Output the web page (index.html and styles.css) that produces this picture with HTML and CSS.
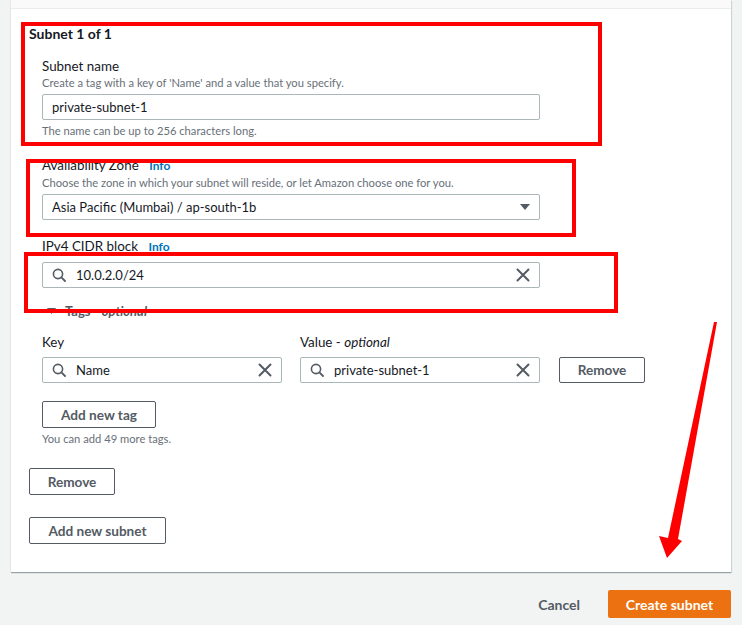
FILE: index.html
```html
<!DOCTYPE html>
<html lang="en">
<head>
    <meta charset="UTF-8">
    <title>Create subnet</title>
    <link rel="stylesheet" href="styles.css">
</head>
<body>
    <div class="page">
        <div class="card">
            <div class="card-top"></div>
            <div class="card-body">
                <h3 class="subnet-title">Subnet 1 of 1</h3>

                <div class="field first">
                    <label class="label">Subnet name</label>
                    <p class="desc">Create a tag with a key of 'Name' and a value that you specify.</p>
                    <div class="input wide">
                        <span class="value">private-subnet-1</span>
                    </div>
                    <p class="hint">The name can be up to 256 characters long.</p>
                </div>

                <div class="field az">
                    <label class="label">Availability Zone <a class="info">Info</a></label>
                    <p class="desc">Choose the zone in which your subnet will reside, or let Amazon choose one for you.</p>
                    <div class="input wide">
                        <span class="value">Asia Pacific (Mumbai) / ap-south-1b</span>
                        <svg class="caret" width="10" height="6" viewBox="0 0 10 6"><polygon points="0,0 10,0 5,6" fill="#545b64"/></svg>
                    </div>
                </div>

                <div class="field cidr">
                    <label class="label">IPv4 CIDR block <a class="info">Info</a></label>
                    <div class="input wide search">
                        <svg class="icon-search" width="14" height="14" viewBox="0 0 14 14"><circle cx="6" cy="6" r="4.6" fill="none" stroke="#545b64" stroke-width="1.6"/><line x1="9.4" y1="9.4" x2="13" y2="13" stroke="#545b64" stroke-width="1.8" stroke-linecap="round"/></svg>
                        <span class="value">10.0.2.0/24</span>
                        <svg class="icon-x" width="14" height="14" viewBox="0 0 14 14"><path d="M1.5 1.5 L12.5 12.5 M12.5 1.5 L1.5 12.5" stroke="#545b64" stroke-width="2" stroke-linecap="round"/></svg>
                    </div>
                </div>

                <div class="tags-head">
                    <svg width="9" height="6" viewBox="0 0 9 6"><polygon points="0,0 9,0 4.5,6" fill="#545b64"/></svg>
                    <span>Tags - <i>optional</i></span>
                </div>

                <div class="tags">
                    <div class="tag-row">
                        <div class="tag-col">
                            <label class="label">Key</label>
                            <div class="input search">
                                <svg class="icon-search" width="14" height="14" viewBox="0 0 14 14"><circle cx="6" cy="6" r="4.6" fill="none" stroke="#545b64" stroke-width="1.6"/><line x1="9.4" y1="9.4" x2="13" y2="13" stroke="#545b64" stroke-width="1.8" stroke-linecap="round"/></svg>
                                <span class="value">Name</span>
                                <svg class="icon-x" width="14" height="14" viewBox="0 0 14 14"><path d="M1.5 1.5 L12.5 12.5 M12.5 1.5 L1.5 12.5" stroke="#545b64" stroke-width="2" stroke-linecap="round"/></svg>
                            </div>
                        </div>
                        <div class="tag-col">
                            <label class="label">Value - <i>optional</i></label>
                            <div class="input search">
                                <svg class="icon-search" width="14" height="14" viewBox="0 0 14 14"><circle cx="6" cy="6" r="4.6" fill="none" stroke="#545b64" stroke-width="1.6"/><line x1="9.4" y1="9.4" x2="13" y2="13" stroke="#545b64" stroke-width="1.8" stroke-linecap="round"/></svg>
                                <span class="value">private-subnet-1</span>
                                <svg class="icon-x" width="14" height="14" viewBox="0 0 14 14"><path d="M1.5 1.5 L12.5 12.5 M12.5 1.5 L1.5 12.5" stroke="#545b64" stroke-width="2" stroke-linecap="round"/></svg>
                            </div>
                        </div>
                        <button class="btn btn-remove-tag">Remove</button>
                    </div>
                    <button class="btn btn-add-tag">Add new tag</button>
                    <p class="hint">You can add 49 more tags.</p>
                </div>

                <button class="btn btn-remove">Remove</button>
                <button class="btn btn-add-subnet">Add new subnet</button>
            </div>
        </div>

        <div class="actions">
            <a class="cancel">Cancel</a>
            <button class="btn-primary">Create subnet</button>
        </div>

        <!-- annotations drawn over the screenshot -->
        <div class="mark mark-1"></div>
        <div class="mark mark-2"></div>
        <div class="mark mark-3"></div>
        <svg class="arrow" width="742" height="625" viewBox="0 0 742 625">
            <polygon points="714,322 717,322 678,539 682,541 667,558 659,536 668,538" fill="#f00"/>
        </svg>
    </div>
</body>
</html>
```

FILE: styles.css
```css
* {
    padding: 0;
    margin: 0;
    box-sizing: border-box;
}

body {
    background-color: #f2f3f3;
    font-family: Lato, "Liberation Sans", sans-serif;
    color: #16191f;
    font-size: 14px;
}

.page {
    position: relative;
    width: 742px;
    height: 625px;
    padding: 0 11px;
    overflow: hidden;
}

.card {
    background-color: white;
    height: 572px;
    box-shadow: 0 1px 1px rgba(0, 28, 36, 0.3), 1px 1px 1px rgba(0, 28, 36, 0.1);
}

.card-top {
    height: 9px;
    background-color: #fafafa;
    border-bottom: 1px solid #eaeded;
}

.card-body {
    padding: 15px 18px 0;
}

.subnet-title {
    font-size: 14px;
    font-weight: 700;
    line-height: 20px;
}

.field {
    padding-left: 13px;
    width: 511px;
}

.field.first {
    margin-top: 13px;
}

.field.az {
    margin-top: 17px;
}

.field.cidr {
    margin-top: 17px;
}

.label {
    display: block;
    font-size: 13.4px;
    line-height: 18px;
}

.info {
    color: #0073bb;
    font-weight: 700;
    font-size: 12px;
    margin-left: 7px;
}

.desc,
.hint {
    font-size: 11.2px;
    line-height: 16px;
    color: #687078;
}

.desc {
    margin-bottom: 3px;
}

.hint {
    margin-top: 3px;
}

.cidr .input {
    margin-top: 6px;
}

.input {
    display: flex;
    align-items: center;
    height: 26px;
    border: 1px solid #aab7b8;
    border-radius: 2px;
    padding: 0 9px;
    background: white;
}

.input.wide {
    width: 498px;
}

.input .value {
    flex: 1;
    font-size: 13px;
}

.input.search .icon-search {
    margin-right: 10px;
}

.tags-head {
    display: flex;
    align-items: center;
    margin: 15px 0 0 18px;
    font-size: 13px;
    font-weight: 700;
    color: #545b64;
    line-height: 16px;
}

.tags-head svg {
    margin-right: 9px;
}

.tags {
    padding-left: 13px;
    margin-top: 14px;
}

.tag-row {
    display: flex;
    align-items: flex-end;
}

.tag-col {
    width: 240px;
    margin-right: 18px;
}

.tag-col .label {
    margin-bottom: 6px;
}

.btn {
    display: block;
    height: 27px;
    background: white;
    border: 1px solid #545b64;
    border-radius: 2px;
    color: #545b64;
    font-family: inherit;
    font-size: 13.6px;
    font-weight: 700;
}

.btn-remove-tag {
    width: 86px;
    margin-left: 1px;
    height: 26px;
}

.btn-add-tag {
    width: 114px;
    margin-top: 18px;
}

.btn-remove {
    width: 86px;
    margin-top: 21px;
}

.btn-add-subnet {
    width: 137px;
    margin-top: 22px;
}

.actions {
    display: flex;
    justify-content: flex-end;
    align-items: center;
    padding-top: 18px;
}

.cancel {
    color: #545b64;
    font-weight: 700;
    font-size: 14px;
    margin-right: 28px;
}

.btn-primary {
    width: 123px;
    height: 28px;
    background-color: #ec7211;
    border: none;
    border-radius: 2px;
    color: white;
    font-family: inherit;
    font-size: 14px;
    font-weight: 700;
}

.mark {
    position: absolute;
    border: 4px solid #f00;
}

.mark-1 {
    left: 21px;
    top: 22px;
    width: 581px;
    height: 124px;
}

.mark-2 {
    left: 26px;
    top: 159px;
    width: 550px;
    height: 78px;
}

.mark-3 {
    left: 24px;
    top: 252px;
    width: 594px;
    height: 61px;
}

.arrow {
    position: absolute;
    left: 0;
    top: 0;
}
```
